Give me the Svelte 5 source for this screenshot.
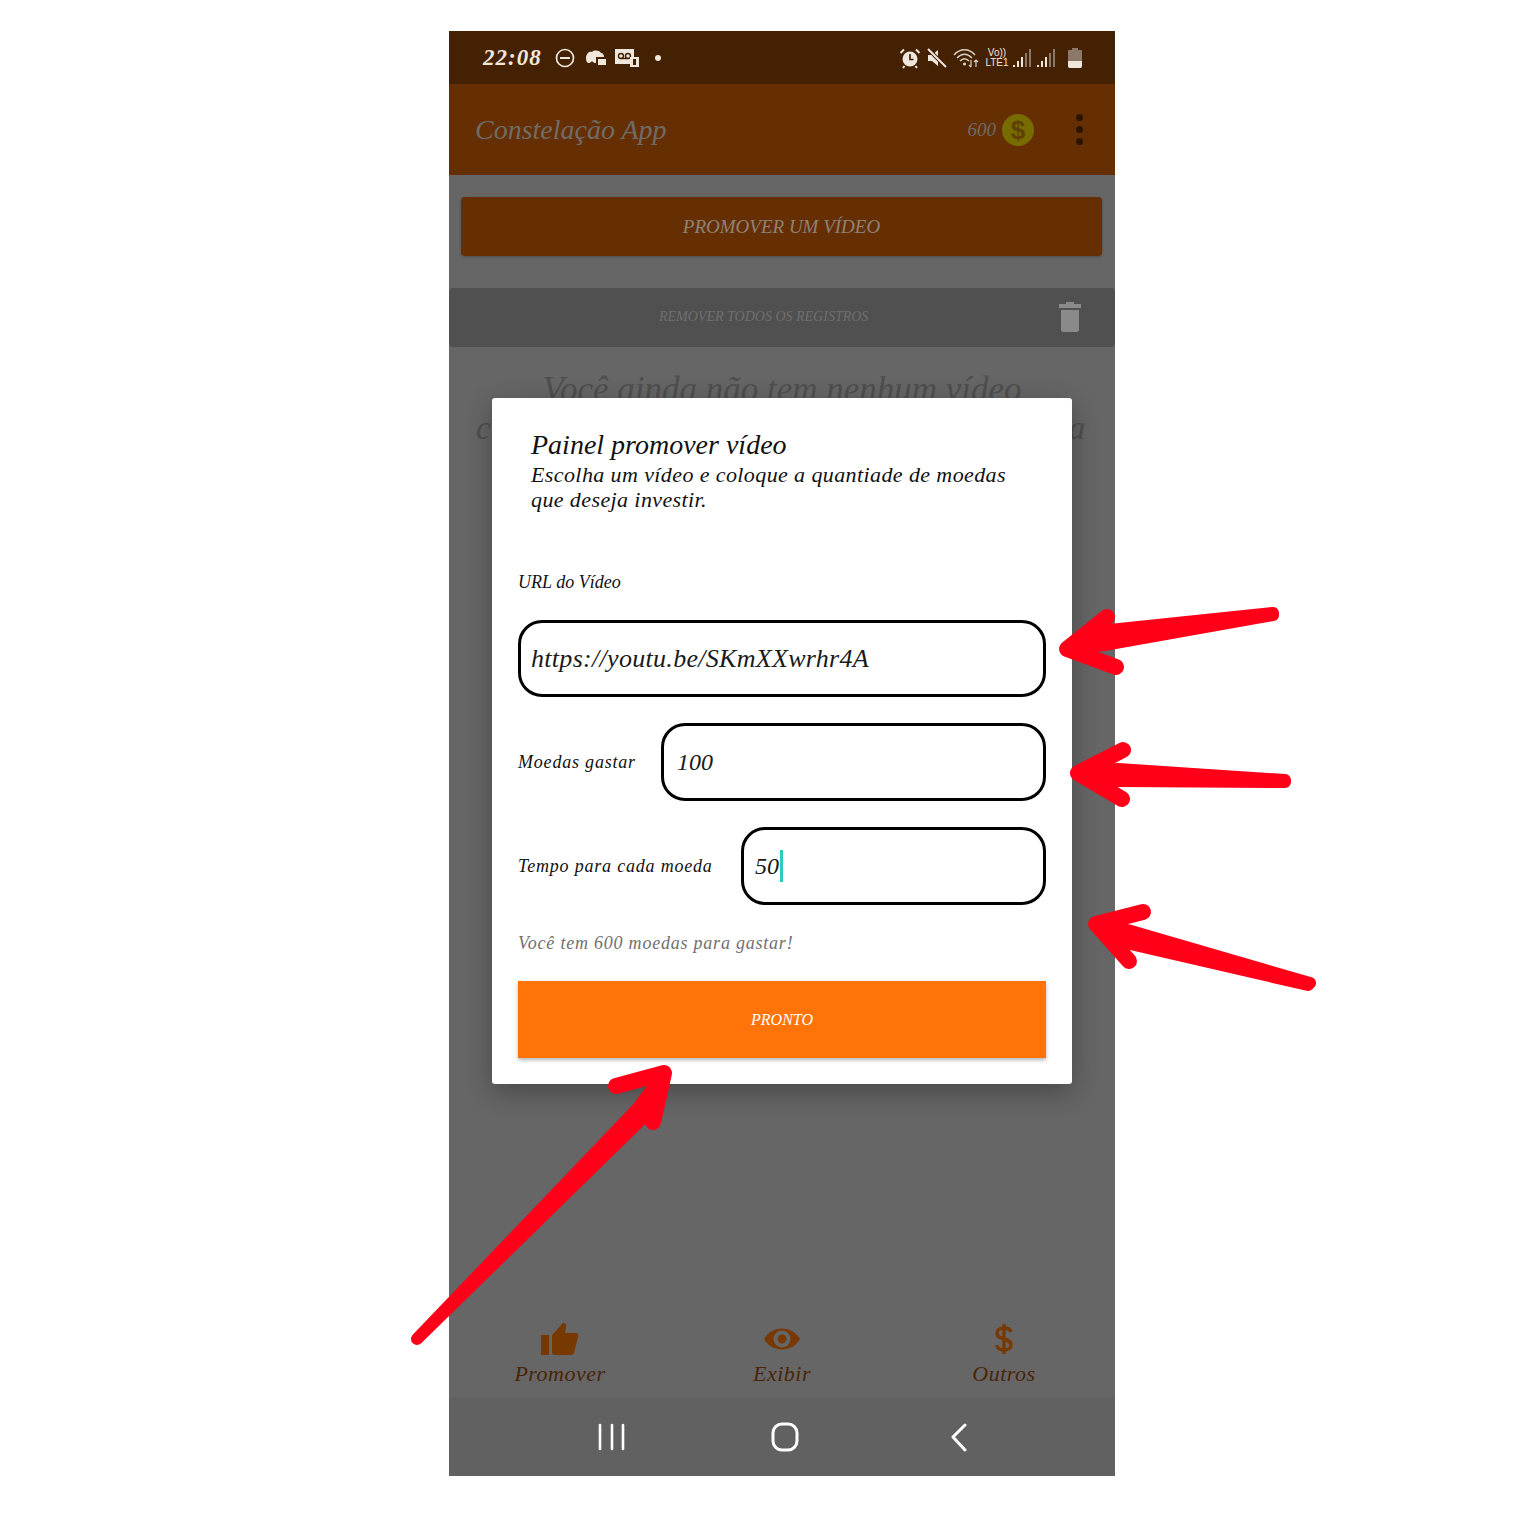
<script>
  const tabs = [
    { label: 'Promover', icon: 'thumb' },
    { label: 'Exibir', icon: 'eye' },
    { label: 'Outros', icon: 'dollar' }
  ];

  // each arrow: tapered shaft polygon and the two head strokes
  const arrows = [
    { shaft: '1273,613 1273,615 1104,645 1067,649 1100,631', head: '1107,617 1067,649 1116,667' },
    { shaft: '1285,780 1285,782 1118,781 1078,773 1118,769', head: '1123,750 1078,773 1122,799' },
    { shaft: '1310,983 1308,985 1126,943 1096,924 1131,931', head: '1143,912 1096,924 1129,961' },
    { shaft: '417,1339 645,1116 664,1073 637,1109', head: '616,1086 664,1073 653,1122' }
  ];
</script>

<div class="page">
  <div class="phone">
    <div class="status">
      <div class="status-left">
        <span class="clock">22:08</span>
        <svg class="ic" width="20" height="20" viewBox="0 0 20 20"><circle cx="10" cy="10" r="8.5" fill="none" stroke="#efe6dc" stroke-width="1.7"/><rect x="5" y="9" width="10" height="2" fill="#efe6dc"/></svg>
        <svg class="ic" width="22" height="20" viewBox="0 0 22 20"><path d="M1 9C2 4 5 3 7 4C9 2 14 2 16 5C18 5 19 7 19 9H11V15H9C8 13 6 13 5 15H3C1 14 1 11 1 9Z" fill="#efe6dc"/><rect x="13" y="11" width="8" height="6" fill="#efe6dc"/></svg>
        <svg class="ic" width="24" height="20" viewBox="0 0 24 20"><rect x="0" y="1" width="19" height="15" fill="#efe6dc"/><circle cx="6" cy="8" r="2.5" fill="none" stroke="#452103" stroke-width="1.4"/><circle cx="13" cy="8" r="2.5" fill="none" stroke="#452103" stroke-width="1.4"/><path d="M6 10.5H13" stroke="#452103" stroke-width="1.4"/><rect x="15" y="9" width="9" height="10" fill="#efe6dc"/><rect x="18" y="11" width="3" height="6" fill="#452103"/></svg>
        <span class="dot"></span>
      </div>
      <div class="status-right">
        <svg class="ic" width="22" height="22" viewBox="0 0 22 22"><circle cx="11" cy="12" r="7.5" fill="#efe6dc"/><path d="M11 7V12.5H14.5" stroke="#452103" stroke-width="1.7" fill="none"/><path d="M1.500 6L5 2.500M20.500 6L17 2.500M5.500 19L4 21M16.500 19L18 21" stroke="#efe6dc" stroke-width="2"/></svg>
        <svg class="ic" width="20" height="20" viewBox="0 0 20 20"><path d="M1 7H5L11 2V18L5 13H1Z" fill="#efe6dc"/><path d="M1 1L19 19" stroke="#452103" stroke-width="4"/><path d="M1 1L19 19" stroke="#efe6dc" stroke-width="2"/></svg>
        <svg class="ic" width="26" height="22" viewBox="0 0 26 22"><path d="M1 8C7 1 16 1 22 8M4 11C9 6 14 6 19 11M7 14C10 11 13 11 16 14" fill="none" stroke="#d9cfc4" stroke-width="1.600"/><circle cx="11.500" cy="17" r="1.600" fill="#d9cfc4"/><path d="M18 13V20M16 18L18 20M23 20V13M21 15L23 13L25 15" fill="none" stroke="#d9cfc4" stroke-width="1.200"/></svg>
        <span class="volte">Vo))<br>LTE1</span>
        <svg class="ic sig" width="18" height="20" viewBox="0 0 18 20"><path d="M1 17V19M5 13V19M9 9V19" stroke="#efe6dc" stroke-width="2"/><path d="M13 5V19M17 1V19" stroke="#8c7868" stroke-width="2"/></svg>
        <svg class="ic sig2" width="18" height="20" viewBox="0 0 18 20"><path d="M1 17V19M5 13V19M9 9V19" stroke="#efe6dc" stroke-width="2"/><path d="M13 5V19M17 1V19" stroke="#8c7868" stroke-width="2"/></svg>
        <svg class="ic batt" width="14" height="20" viewBox="0 0 14 20"><path d="M4 0H10V2H13Q14 2 14 3V18Q14 20 12 20H2Q0 20 0 18V3Q0 2 1 2H4Z" fill="#8c7868"/><path d="M0 13H14V18Q14 20 12 20H2Q0 20 0 18Z" fill="#efe6dc"/></svg>
      </div>
    </div>

    <header class="toolbar">
      <span class="app-title">Constelação App</span>
      <div class="toolbar-right">
        <span class="coins">600</span>
        <span class="coin">$</span>
        <span class="menu"><i></i><i></i><i></i></span>
      </div>
    </header>

    <main class="content">
      <div class="promote">PROMOVER UM VÍDEO</div>
      <div class="remove">
        <span>REMOVER TODOS OS REGISTROS</span>
        <svg width="24" height="32" viewBox="0 0 24 32"><path d="M1 3H8V1H16V3H23V7H1Z" fill="#8a8a8a"/><path d="M3 9H21V29Q21 31 19 31H5Q3 31 3 29Z" fill="#8a8a8a"/></svg>
      </div>
      <div class="empty">
        <p>Você ainda não tem nenhum vídeo</p>
        <p class="second">cadastrado, clique em promover agora</p>
      </div>

      <nav class="tabs">
        {#each tabs as tab}
          <div class="tab">
            {#if tab.icon === 'thumb'}
              <svg width="38" height="34" viewBox="0 0 38 34"><rect x="0" y="13" width="8" height="20" fill="#773802"/><path d="M11 13L22 1Q26 1 25 5L24 11H35Q38 11 37 15L33 31Q32 33 30 33H14Q11 33 11 30Z" fill="#773802"/></svg>
            {:else if tab.icon === 'eye'}
              <svg width="36" height="34" viewBox="0 0 36 34"><path fill-rule="evenodd" d="M0 17C8 3 28 3 36 17C28 31 8 31 0 17ZM18 8.500A8.500 8.500 0 1 0 18 25.500A8.500 8.500 0 1 0 18 8.500ZM18 12.500A4.500 4.500 0 1 1 18 21.500A4.500 4.500 0 1 1 18 12.500Z" fill="#773802"/></svg>
            {:else}
              <svg width="20" height="34" viewBox="0 0 20 34"><path d="M17 10C16 7 13 6 10 6C6 6 3 8 3 11C3 19 17 15 17 23C17 26 14 28 10 28C6 28 3 26 3 23M10 2V32" fill="none" stroke="#773802" stroke-width="3.400"/></svg>
            {/if}
            <span>{tab.label}</span>
          </div>
        {/each}
      </nav>

      <div class="overlay">
        <div class="modal">
          <div class="modal-head">
            <h2>Painel promover vídeo</h2>
            <p>Escolha um vídeo e coloque a quantiade de moedas que deseja investir.</p>
          </div>
          <label class="url-label" for="url">URL do Vídeo</label>
          <div class="field" id="url">https://youtu.be/SKmXXwrhr4A</div>
          <div class="row">
            <span class="row-label">Moedas gastar</span>
            <div class="field small first">100</div>
          </div>
          <div class="row">
            <span class="row-label">Tempo para cada moeda</span>
            <div class="field small second-field">50<span class="caret"></span></div>
          </div>
          <div class="hint">Você tem 600 moedas para gastar!</div>
          <div class="done">PRONTO</div>
        </div>
      </div>
    </main>

    <div class="navbar">
      <svg width="28" height="28" viewBox="0 0 28 28"><path d="M2 2V26M14 2V26M25 2V26" stroke="#fff" stroke-width="2.600" stroke-linecap="round"/></svg>
      <svg width="28" height="30" viewBox="0 0 28 30"><rect x="2" y="2" width="24" height="26" rx="9" fill="none" stroke="#fff" stroke-width="3"/></svg>
      <svg width="18" height="30" viewBox="0 0 18 30"><path d="M15 3L3 15L15 28" fill="none" stroke="#fff" stroke-width="3" stroke-linecap="round" stroke-linejoin="round"/></svg>
    </div>
  </div>

  <svg class="arrows" width="1536" height="1536" viewBox="0 0 1536 1536">
    {#each arrows as a}
      <polygon points={a.shaft} fill="#ff0018" stroke="#ff0018" stroke-width="12" stroke-linejoin="round"/>
      <polyline points={a.head} fill="none" stroke="#ff0018" stroke-width="16" stroke-linecap="round" stroke-linejoin="round"/>
    {/each}
  </svg>
</div>

<style>
  :global(body) {
    margin: 0;
    background: #fff;
  }

  .page {
    position: relative;
    width: 1536px;
    height: 1536px;
    padding: 31px 0 0 449px;
    box-sizing: border-box;
    font-family: "Liberation Serif", serif;
    font-style: italic;
    overflow: hidden;
  }

  .phone {
    width: 666px;
    height: 1445px;
    display: flex;
    flex-direction: column;
    background: #666;
  }

  .status {
    height: 53px;
    flex: none;
    background: #452103;
    display: flex;
    justify-content: space-between;
    align-items: center;
    padding: 0 33px 0 34px;
    color: #efe6dc;
  }

  .status-left,
  .status-right {
    display: flex;
    align-items: center;
  }

  .ic {
    display: block;
  }

  .clock {
    font-size: 23px;
    font-weight: bold;
    letter-spacing: 1px;
    width: 72px;
  }

  .status-left .ic {
    margin-right: 10px;
  }

  .status-left .ic:nth-child(3) {
    margin-right: 8px;
  }

  .status-left .ic:nth-child(4) {
    margin-right: 16px;
  }

  .dot {
    width: 6px;
    height: 6px;
    border-radius: 50%;
    background: #efe6dc;
  }

  .status-right .ic {
    margin-right: 6px;
  }

  .volte {
    font: 10px/10px "Liberation Sans", sans-serif;
    text-align: center;
    width: 24px;
  }

  .status-right .sig {
    margin: 0 6px 0 4px;
  }

  .status-right .sig2 {
    margin-right: 13px;
  }

  .status-right .batt {
    margin: 0;
  }

  .toolbar {
    height: 91px;
    flex: none;
    box-sizing: border-box;
    background: #662f03;
    display: flex;
    justify-content: space-between;
    align-items: center;
    padding: 0 32px 0 26px;
  }

  .app-title {
    font-size: 28px;
    color: #6f6c68;
  }

  .toolbar-right {
    display: flex;
    align-items: center;
  }

  .coins {
    font-size: 19px;
    color: #6f6c68;
    margin-right: 6px;
  }

  .coin {
    width: 32px;
    height: 32px;
    border-radius: 50%;
    background: #776c00;
    color: #5f3f02;
    font: bold 26px/32px "Liberation Sans", sans-serif;
    text-align: center;
    margin-right: 42px;
  }

  .menu {
    display: flex;
    flex-direction: column;
    gap: 5px;
  }

  .menu i {
    width: 7px;
    height: 7px;
    border-radius: 50%;
    background: #2b1402;
  }

  .content {
    position: relative;
    flex: 1;
    display: flex;
    flex-direction: column;
    padding-top: 22px;
    background: #666;
  }

  .promote {
    height: 59px;
    margin: 0 13px 0 12px;
    flex: none;
    border-radius: 4px;
    background: #662f03;
    box-shadow: 0 1px 3px rgba(0, 0, 0, 0.25);
    color: #8e8378;
    font-size: 19px;
    display: flex;
    align-items: center;
    justify-content: center;
  }

  .remove {
    height: 59px;
    margin-top: 32px;
    flex: none;
    border-radius: 4px;
    background: #505050;
    display: flex;
    align-items: center;
    justify-content: space-between;
    padding: 0 33px 2px 210px;
    box-sizing: border-box;
    color: #6f6f6f;
    font-size: 14px;
  }

  .empty {
    text-align: center;
    color: #4f4f4f;
    font-size: 35px;
    line-height: 38px;
    margin-top: 24px;
    flex: 1;
    white-space: nowrap;
  }

  .empty p {
    margin: 0;
  }

  .empty .second {
    font-size: 33px;
    letter-spacing: 2.700px;
  }

  .tabs {
    display: grid;
    grid-template-columns: repeat(3, 1fr);
    height: 90px;
    flex: none;
  }

  .tab {
    display: flex;
    flex-direction: column;
    align-items: center;
    padding-top: 14px;
    color: #4a2408;
    font-size: 22px;
    letter-spacing: 0.500px;
  }

  .tab svg {
    margin-bottom: 5px;
  }

  .overlay {
    position: absolute;
    inset: 0;
    padding: 223px 43px 0;
    pointer-events: none;
  }

  .modal {
    height: 686px;
    box-sizing: border-box;
    background: #fff;
    border-radius: 3px;
    box-shadow: 0 8px 28px rgba(0, 0, 0, 0.3);
    padding: 30px 26px 0;
    color: #111;
  }

  .modal-head {
    padding-left: 13px;
    height: 124px;
    max-width: 490px;
  }

  h2 {
    font-size: 28px;
    font-weight: normal;
    line-height: 34px;
    margin: 0;
  }

  .modal-head p {
    margin: 0;
    font-size: 22px;
    line-height: 25px;
    letter-spacing: 0.400px;
  }

  .url-label {
    display: block;
    height: 68px;
    padding-top: 19px;
    box-sizing: border-box;
    font-size: 18px;
    line-height: 22px;
  }

  .field {
    height: 77px;
    box-sizing: border-box;
    border: 3px solid #000;
    border-radius: 24px;
    display: flex;
    align-items: center;
    padding-left: 10px;
    font-size: 26px;
    letter-spacing: 0.300px;
    color: #1a1a1a;
  }

  .row {
    display: flex;
    align-items: center;
    justify-content: space-between;
    margin-top: 26px;
  }

  .row-label {
    font-size: 18px;
    letter-spacing: 0.800px;
  }

  .small {
    height: 78px;
    font-size: 24px;
    letter-spacing: 0;
    padding-left: 13px;
  }

  .first {
    width: 385px;
  }

  .second-field {
    width: 305px;
    padding-left: 11px;
  }

  .caret {
    width: 3px;
    height: 32px;
    background: #2dcbbc;
    margin-left: 1px;
  }

  .hint {
    height: 76px;
    padding-top: 27px;
    box-sizing: border-box;
    font-size: 18px;
    line-height: 22px;
    color: #707070;
    letter-spacing: 0.780px;
  }

  .done {
    height: 77px;
    background: #ff7308;
    box-shadow: 0 2px 4px rgba(0, 0, 0, 0.3);
    color: #fff;
    font-size: 16px;
    display: flex;
    align-items: center;
    justify-content: center;
  }

  .navbar {
    height: 78px;
    flex: none;
    background: #616161;
    display: flex;
    align-items: center;
    padding-left: 149px;
  }

  .navbar svg:nth-child(2) {
    margin-left: 145px;
  }

  .navbar svg:nth-child(3) {
    margin-left: 151px;
  }

  .arrows {
    position: absolute;
    left: 0;
    top: 0;
    pointer-events: none;
  }
</style>
